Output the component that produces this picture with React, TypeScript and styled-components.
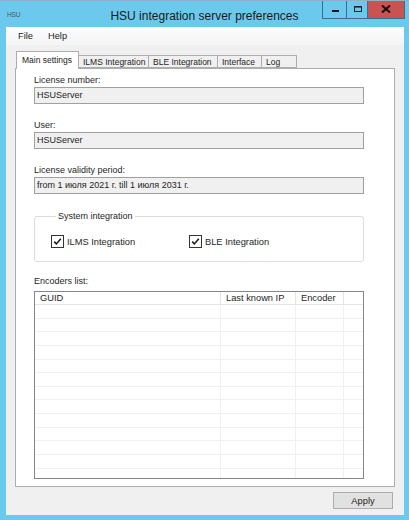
import * as React from 'react'
import styled, { createGlobalStyle } from 'styled-components'

const GlobalStyle = createGlobalStyle`
    html, body {
        margin: 0;
        padding: 0;
        background: #6ac9ec;
    }
    * {
        box-sizing: border-box;
    }
`

const Window = styled.div`
    display: flex;
    flex-direction: column;
    width: 409px;
    height: 520px;
    background: #6ac9ec;
    border-top: 1px solid #8fb2c2;
    font-family: "Liberation Sans", Arial, sans-serif;
    font-size: 9px;
    color: #1e1e1e;
    overflow: hidden;
`

const TitleBar = styled.div`
    display: grid;
    grid-template-columns: 1fr auto 1fr;
    height: 26px;
    flex-shrink: 0;
`

const AppBadge = styled.div`
    align-self: center;
    padding-left: 7px;
    padding-top: 1px;
    font-size: 6.5px;
    color: #4a5a63;
    letter-spacing: -0.2px;
`

const Title = styled.div`
    align-self: center;
    padding-top: 3px;
    font-size: 12px;
    color: #1a1a1a;
`

const Controls = styled.div`
    justify-self: end;
    display: flex;
    height: 19px;
    margin-top: -1px;
    margin-right: 4px;
    border: 1px solid #3a6f88;
    border-top: none;
`

const ControlButton = styled.div<{ $w: number; $close?: boolean }>`
    display: flex;
    align-items: center;
    justify-content: center;
    width: ${p => p.$w}px;
    height: 100%;
    background: ${p => (p.$close ? '#c75450' : 'transparent')};
    & + & {
        border-left: 1px solid #3a6f88;
    }
`

const Client = styled.div`
    display: flex;
    flex-direction: column;
    height: 488px;
    margin: 0 5px 5px 6px;
    background: #f0f0f0;
`

const MenuBar = styled.div`
    display: flex;
    align-items: center;
    height: 19px;
    padding-left: 6px;
    background: linear-gradient(#fcfcfd, #f3f4f5);
    border-bottom: 1px solid #f0f0f0;
`

const MenuItem = styled.span`
    padding: 0 5px 0 6px;
    margin-right: 4px;
    font-size: 9.3px;
`

const TabStrip = styled.div`
    display: flex;
    align-items: flex-end;
    height: 17px;
    margin: 5px 0 0 10px;
    position: relative;
    z-index: 1;
`

const Tab = styled.div<{ $active?: boolean; $w: number }>`
    width: ${p => p.$w}px;
    height: ${p => (p.$active ? 18 : 13)}px;
    margin-bottom: ${p => (p.$active ? -1 : 0)}px;
    padding: ${p => (p.$active ? '3px 0 0 5px' : '1px 0 0 4px')};
    background: ${p => (p.$active ? '#ffffff' : '#f0f0f0')};
    border: 1px solid #adadad;
    border-bottom: ${p => (p.$active ? 'none' : '1px solid #adadad')};
    margin-left: ${p => (p.$active ? 0 : -1)}px;
    font-size: 8.5px;
    line-height: 11px;
    white-space: nowrap;
    overflow: hidden;
`

const TabPage = styled.div`
    display: flex;
    flex-direction: column;
    width: 380px;
    height: 419px;
    margin-left: 9px;
    padding: 5px 0 0 18px;
    background: #ffffff;
    border: 1px solid #adadad;
`

const FieldLabel = styled.div<{ $gap?: number }>`
    height: 13px;
    line-height: 13px;
    margin-top: ${p => p.$gap ?? 0}px;
`

const ReadOnlyBox = styled.div`
    width: 330px;
    height: 17px;
    padding-left: 2px;
    line-height: 15px;
    background: #f0f0f0;
    border: 1px solid #a0a0a0;
    white-space: nowrap;
`

const GroupBox = styled.fieldset`
    width: 330px;
    height: 52px;
    margin: 16px 0 0 0;
    padding: 12px 0 0 16px;
    border: 1px solid #dcdcdc;
    border-radius: 3px;
    display: flex;
`

const GroupLegend = styled.legend`
    margin-left: 5px;
    padding: 0 2px;
    line-height: 13px;
`

const CheckRow = styled.div`
    display: flex;
    align-items: center;
`

const CheckItem = styled.label<{ $w?: number }>`
    display: flex;
    align-items: center;
    gap: 3px;
    width: ${p => (p.$w ? `${p.$w}px` : 'auto')};
    font-size: 9.3px;
`

const CheckBox = styled.span`
    display: flex;
    align-items: center;
    justify-content: center;
    width: 13px;
    height: 13px;
    background: #ffffff;
    border: 1px solid #333333;
`

const ListView = styled.div`
    width: 330px;
    height: 188px;
    margin-top: 3px;
    border: 1px solid #828790;
    overflow: hidden;
`

const columns = '186px 75px 48px 1fr'

const HeaderRow = styled.div`
    display: grid;
    grid-template-columns: ${columns};
    height: 13px;
    border-bottom: 1px solid #e5e5e5;
`

const HeaderCell = styled.div`
    padding-left: 5px;
    line-height: 12px;
    border-right: 1px solid #e5e5e5;
    white-space: nowrap;
    font-size: 9.3px;
    &:last-child {
        border-right: none;
    }
`

const GridRow = styled.div`
    display: grid;
    grid-template-columns: ${columns};
    height: 13.65px;
    border-bottom: 1px solid #f0f0f0;
`

const GridCell = styled.div`
    border-right: 1px solid #f0f0f0;
    &:last-child {
        border-right: none;
    }
`

const Footer = styled.div`
    display: flex;
    justify-content: flex-end;
    margin-top: 5px;
    padding-right: 11px;
`

const Button = styled.button`
    width: 60px;
    height: 17px;
    padding: 0;
    font-family: inherit;
    font-size: 9.3px;
    color: #1e1e1e;
    background: #e1e1e1;
    border: 1px solid #adadad;
`

// small tick used inside the checkboxes
const Check = () => (
    <svg width="9" height="9" viewBox="0 0 9 9">
        <path d="M1.2 4.6 L3.4 6.9 L7.8 1.8" fill="none" stroke="#1e1e1e" strokeWidth="1.6" />
    </svg>
)

export default function App() {
    const rows = Array.from({ length: 13 }, (_, i) => i)

    return (
        <Window>
            <GlobalStyle />
            <TitleBar>
                <AppBadge>HSU</AppBadge>
                <Title>HSU integration server preferences</Title>
                <Controls>
                    <ControlButton $w={23}>
                        <svg width="8" height="8" viewBox="0 0 8 8">
                            <rect x="1" y="5" width="7" height="2" fill="#111" />
                        </svg>
                    </ControlButton>
                    <ControlButton $w={21}>
                        <svg width="9" height="8" viewBox="0 0 9 8">
                            <rect x="1.5" y="1.5" width="7" height="5" fill="none" stroke="#222" strokeWidth="1" />
                            <rect x="1" y="1" width="8" height="1.6" fill="#222" />
                        </svg>
                    </ControlButton>
                    <ControlButton $w={37} $close>
                        <svg width="10" height="8" viewBox="0 0 10 8">
                            <path d="M1 0.5 L9 7.5 M9 0.5 L1 7.5" stroke="#111" strokeWidth="2" />
                        </svg>
                    </ControlButton>
                </Controls>
            </TitleBar>
            <Client>
                <MenuBar>
                    <MenuItem>File</MenuItem>
                    <MenuItem>Help</MenuItem>
                </MenuBar>
                <TabStrip>
                    <Tab $active $w={63}>Main settings</Tab>
                    <Tab $w={71}>ILMS Integration</Tab>
                    <Tab $w={70}>BLE Integration</Tab>
                    <Tab $w={45}>Interface</Tab>
                    <Tab $w={36}>Log</Tab>
                </TabStrip>
                <TabPage>
                    <FieldLabel>License number:</FieldLabel>
                    <ReadOnlyBox>HSUServer</ReadOnlyBox>
                    <FieldLabel $gap={15}>User:</FieldLabel>
                    <ReadOnlyBox>HSUServer</ReadOnlyBox>
                    <FieldLabel $gap={15}>License validity period:</FieldLabel>
                    <ReadOnlyBox>from 1 июля 2021 г. till 1 июля 2031 г.</ReadOnlyBox>
                    <GroupBox>
                        <GroupLegend>System integration</GroupLegend>
                        <CheckRow>
                            <CheckItem $w={138}>
                                <CheckBox><Check /></CheckBox>
                                ILMS Integration
                            </CheckItem>
                            <CheckItem>
                                <CheckBox><Check /></CheckBox>
                                BLE Integration
                            </CheckItem>
                        </CheckRow>
                    </GroupBox>
                    <FieldLabel $gap={13}>Encoders list:</FieldLabel>
                    <ListView>
                        <HeaderRow>
                            <HeaderCell>GUID</HeaderCell>
                            <HeaderCell>Last known IP</HeaderCell>
                            <HeaderCell>Encoder</HeaderCell>
                            <HeaderCell />
                        </HeaderRow>
                        {rows.map(r => (
                            <GridRow key={r}>
                                <GridCell />
                                <GridCell />
                                <GridCell />
                                <GridCell />
                            </GridRow>
                        ))}
                    </ListView>
                </TabPage>
                <Footer>
                    <Button>Apply</Button>
                </Footer>
            </Client>
        </Window>
    )
}
